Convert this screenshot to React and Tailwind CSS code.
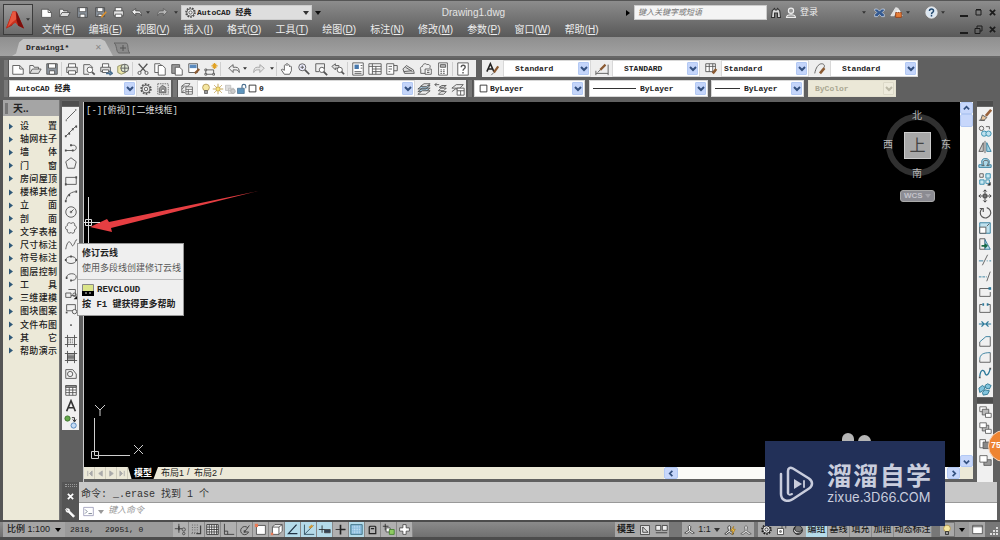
import React from "react";

const steel = "#4a6f8f";

const glyphs = {
  file: <><path fill="#fff" d="M2 4h8l4 4v6H2z" /><path d="M10 4v4h4" /></>,
  open: <><path fill="#f3f3f3" d="M2 13V4h4l1 2h5v2" /><path fill="#ddd" d="M2 13l3-5h10l-3 5z" /></>,
  save: <><path fill="#8b949e" d="M2 2h12v12H2z" /><path fill="#fff" d="M4 2h8v5H4zM5 10h6v4H5z" /></>,
  saveAs: <><path fill="#8b949e" d="M2 2h11v11H2z" /><path fill="#fff" d="M4 2h7v5H4zM5 10h5v3H5z" /><path stroke="#d9902f" strokeWidth="2" d="M15 7l-6 7" /></>,
  print: <><path fill="#fff" d="M4 6V2h8v4" /><path fill="#e4e4e4" d="M2 6h12v6H2z" /><path fill="#fff" d="M4 10h8v4H4z" /></>,
  preview: <><path d="M8 14H2V3h7l3 3v1" /><circle cx="9" cy="9" r="3.2" fill="#fff" /><path strokeWidth="2" d="M11.500 11.500l3 3" /></>,
  publish: <><path fill="#fff" d="M4 6V2h7v4" /><path fill="#ddd" d="M2 6h11v5H2z" /><path fill="#fff" d="M4 9h7v3H4z" /><path stroke={steel} strokeWidth="2" d="M8 13h5M12 10l3 3-3 2" /></>,
  globe: <><path fill="#ece6a8" stroke="#8b8b5a" d="M2 5l5-2 4 2v7l-5 2-4-2z" /><circle cx="10" cy="7" r="4.500" fill="#dfe7d4" /><path d="M10 2.500v9M5.500 7h9" /></>,
  cut: <><path strokeWidth="1.500" d="M3 2l8 9M13 2l-8 9" /><circle cx="4" cy="12.500" r="1.800" /><circle cx="12" cy="12.500" r="1.800" /></>,
  copy: <><path fill="#fff" d="M2 2h6l2 2v8H2z" /><path fill="#fff" d="M6 4h5l3 3v8H6z" /></>,
  paste: <><path fill="#999" d="M2 3h9v10H2z" /><path fill="#fff" d="M6 6h5l3 3v6H6z" /></>,
  match: <><path fill="#fff" d="M2 2h10v10H2z" /><path fill="#5b8bbf" stroke="none" d="M3 3h8v4H3z" /><path stroke="#8b5a32" strokeWidth="2.500" d="M14 8l-5 5" /></>,
  block: <><path d="M2 9v5h9V9z" /><path fill="#fff" d="M1 8h2v2H1zM1 13h2v2H1zM10 13h2v2h-2z" /><path stroke="#e0a020" strokeWidth="1.300" d="M12 1v7M8.500 4.500h7M10 2l4 5M14 2l-4 5" /></>,
  undo: <path fill="#eee" d="M2 7l5-4v3h3c3 0 4 2 4 6-1-2-2-3-4-3H7v3z" />,
  redo: <path fill="#ddd" d="M14 7L9 3v3H6c-3 0-4 2-4 6 1-2 2-3 4-3h3v3z" />,
  pan: <path fill="#fff" d="M5 14L1.500 9l1-1L5 9.500V4l1-1 1 1V2.500l1-1 1 1V4l1-1 1 1v1.500l1-1 1 1V10l-2 4z" />,
  zoomRt: <><circle cx="6" cy="6" r="4" fill="#eef" /><path d="M6 4v4M4 6h4" /><path strokeWidth="2" d="M9 9l5 5" /></>,
  zoomWin: <><path d="M2 11V2h10v6" /><path d="M2 11h4" /><circle cx="9" cy="9" r="3" fill="#fff" /><path strokeWidth="2" d="M11 11l4 4" /></>,
  zoomPrev: <><path fill="#ddd" d="M1 5l4-3v2h4v3H5v2z" /><circle cx="10" cy="9" r="3" fill="#fff" /><path strokeWidth="2" d="M12 11l3 3" /></>,
  props: <><path fill="#fff" d="M2 1h12v14H2z" /><path fill="#4778ad" stroke="none" d="M4 3h5v5H4z" /><path d="M11 4h2M11 7h2M4 11h8M4 13h8" /></>,
  design: <><path fill="#fff" d="M1 2h14v12H1z" /><path d="M1 5h14M5 2v12M9 5v9M5 8h10M5 11h10" /></>,
  palette: <><path fill="#fff" d="M2 2h8v12H2z" /><path d="M10 4h4v6h-4M4 5h4M4 8h4M4 11h2" /></>,
  sheet: <path fill="#ddd" d="M1 8l4-4 8 5 1 4H3zM2 11l9-1M4 6l8 5" />,
  markup: <><path d="M2 9c-1-2 0-4 2-4 0-3 4-4 5-2 3-1 5 2 3 4" /><path fill="#fff" d="M7 8h7v6H7z" /><path d="M2 9v4h5M9 10h3M9 12h3" /></>,
  calc: <><path fill="#fff" d="M3 1h10v14H3z" /><path fill="#bbb" d="M5 3h6v3H5z" /><path strokeDasharray="2 1" d="M5 9h6M5 11h6M5 13h6" /></>,
  help: <><path fill="#fff" d="M2 1h12v14H2z" /><path strokeWidth="1.600" d="M6 6c0-3 4.500-3 4.500 0 0 2-2.500 1.500-2.500 4M8 11.500v1.500" /></>,
  styleA: <><path stroke="#222" strokeWidth="1.800" d="M1 11L5 2l4 9M3 8h4" /><path stroke="#8b5a32" strokeWidth="2.500" d="M14 5l-5 7" /><path d="M9 12l-3 3" /></>,
  styleDim: <><path d="M1 13h14M1 10v5M15 3v12" /><path stroke="#8b5a32" strokeWidth="2.500" d="M12 3l-6 6" /><path d="M6 9l-3 3" /></>,
  styleTable: <><path fill="#fff" d="M2 2h11v9H2z" /><path d="M2 5h11M6 2v9M10 2v9" /><path stroke="#8b5a32" strokeWidth="3" d="M14 8l-4 5" /></>,
  styleLead: <><path d="M2 13c1-6 4-11 8-11 3 0 4 3 2 5" /><path stroke="#8b5a32" strokeWidth="3" d="M13 7l-5 6" /></>,
  gear: <><circle cx="8" cy="8" r="5.500" strokeDasharray="2 1.400" strokeWidth="2" /><circle cx="8" cy="8" r="4.500" fill="#eee" /><circle cx="8" cy="8" r="2" /></>,
  gearBox: <><path strokeDasharray="2 1" d="M1 1h14v14H1z" /><path fill="#999" d="M3 13V7l4-4 5 3v7z" /><circle cx="8" cy="10" r="2" fill="#fff" /></>,
  layers: <><path fill="#fff" d="M1 5l4-3h6L9 5zM1 9l3-3M1 13l3-3" /><path d="M1 5v8h4" /><path fill="#fff" d="M6 6h8v9H6z" /><path d="M6 9h8M6 12h8M9 9v6" /></>,
  layerSet: <><path fill="#a7cbe2" d="M1 11l5-4h9l-5 4zM1 8l5-4h9l-5 4z" /><path fill="#eee" d="M1 14l5-4h9l-5 4zM4 5l4-3h7l-4 3z" /></>,
  layerPrev: <><path d="M1 3h5M3 1L1 3l2 2" /><path fill="#eee" d="M5 14l3-3h6l-3 3zM5 10l3-3h6l-3 3zM6 6l3-2h5l-3 2z" /></>,
  layerState: <><path fill="#eee" d="M1 7l5-4h8l-4 4zM1 11l4-3h4" /><path fill="#fff" d="M7 7h8v8H7z" /><path d="M7 10h8M11 10v5" /></>,
  bulb: <><circle cx="8" cy="6" r="4.500" fill="#f5e6a0" stroke="#a88a40" /><path fill="#999" d="M6 10h4v4H6z" /></>,
  sun: <><circle cx="8" cy="8" r="3" fill="#f7e27a" stroke="#b08a28" /><path stroke="#b08a28" d="M8 1v3M8 12v3M1 8h3M12 8h3M3 3l2 2M11 11l2 2M13 3l-2 2M5 11l-2 2" /></>,
  freeze: <><path fill="#ddd" stroke="#bbb" d="M2 3h7v7H2zM6 7h7v7H6z" /><circle cx="12" cy="11" r="3" fill="#ccc" stroke="#aaa" /></>,
  unlock: <><path fill="#5e95bd" stroke={steel} d="M2 7h9v7H2z" /><path stroke={steel} strokeWidth="1.500" d="M8 7V4c0-3 5-3 5 0v3" /></>,
  square: <path fill="#fff" stroke="#222" strokeWidth="1.500" d="M2 2h12v12H2z" />,
  line: <><path d="M3 13L13 3" /><path strokeWidth="2" d="M2 14h1M13 2h1" /></>,
  xline: <><path d="M2 14L14 2" /><path strokeWidth="2.500" d="M5 11h2M9 6h2M1 14h2M13 3h2" /></>,
  pline: <><path d="M2 12h9c4 0 4-6 0-6H7" /><path strokeWidth="2.500" d="M1 12h2M9 12h2M7 6h2" /></>,
  polygon: <path d="M8 2l6 4.500L12 14H4L2 6.500z" />,
  rect: <><path d="M2 5h12v8H2z" /><path strokeWidth="2.500" d="M1 13h2M13 5h2" /></>,
  arc: <><path d="M2 14C3 8 6 4 13 3" /><path strokeWidth="2.500" d="M1 14h2M5 7h2M13 3h2" /></>,
  circle: <><circle cx="8" cy="8" r="6" /><path d="M8 8l3-3" /><circle cx="8" cy="8" r="1" /></>,
  cloud: <path d="M4 5c-1-3 3-4 4-2 2-2 5-1 4 2 3 1 3 4 0 5 1 4-3 5-4 3-2 2-5 0-4-3-3 0-3-4 0-5z" />,
  spline: <><path d="M2 14c1-6 3-10 5-8s2 6 4 3 2-6 4-6" /></>,
  ellipse: <><ellipse cx="8" cy="8" rx="6" ry="4" /><path strokeWidth="2.500" d="M1 8h2M13 8h2M7 4h2" /></>,
  ellArc: <><path d="M3 8c1-5 11-5 11 0 0 3-3 4-6 4" /><path strokeWidth="2.500" d="M2 9h2M7 12h2" /></>,
  insert: <><path d="M5 4h8v7H8M2 8h6v5H2z" /><circle cx="12" cy="10" r="2" /><path fill="#111" stroke="none" d="M15 11v4h-4z" /></>,
  makeBlock: <><path d="M3 3h10v6M3 3v7h7" /><path strokeWidth="2" d="M2 12h2" /><circle cx="12" cy="11" r="2.500" /></>,
  point: <path fill="#666" stroke="none" d="M7 7h2v2H7z" />,
  hatch: <><path d="M4 1v14M12 1v14M1 4h14M1 12h14" /><path strokeDasharray="1 1" d="M5 6h6M5 8h6M5 10h6" /></>,
  gradient: <><path fill="#aaa" d="M4 4h8v8H4z" /><path d="M4 1v14M12 1v14M1 4h14M1 12h14M4 7h8M4 9h8" /></>,
  region: <><path d="M2 3h8l4 5v5H2z" /><circle cx="7" cy="8" r="3" /></>,
  table: <><path fill="#fff" d="M2 3h12v11H2z" /><path fill="#999" d="M2 3h12v2H2z" /><path d="M2 8h12M2 11h12M6 5v9M10 5v9" /></>,
  text: <path stroke="#333" strokeWidth="1.900" d="M3 14L8 2l5 12M5 10h6" />,
  addSel: <><circle cx="4" cy="4" r="3" fill="#65a84b" stroke="#386f28" /><path stroke="#222" d="M9 3h3v4M10 5l2 3 2-3" /><circle cx="11" cy="12" r="3" fill="#c4daf4" stroke="#4a80b8" /></>,
  erase: <><path stroke="#98613a" strokeWidth="3" d="M15 2l-6 7" /><path fill="#e9c79f" d="M5 8l5 3-3 3H3z" /><path d="M1 14h7" /></>,
  copyObj: <><circle cx="4" cy="5" r="2.500" /><path d="M9 3h4v3" /><circle cx="7" cy="11" r="3" fill="#bfe1ee" stroke="#2c88aa" /><circle cx="12" cy="11" r="3" fill="#bfe1ee" stroke="#2c88aa" /></>,
  mirror: <><path fill="#ccc" d="M1 13h5V3z" /><path d="M8 1v14" /><path fill="#a9d8e8" stroke="#2c7899" d="M15 13h-5V3z" /></>,
  offset: <><path fill="#acd8e9" stroke="#2c7899" d="M1 13v-3h4c-2-4 0-8 4-7 4 0 5 4 3 7h3v3z" /><path d="M4 11h3c-2-4-1-6 2-6s4 2 1 6h3" /></>,
  array: <><path d="M2 2h4v4H2z" /><path stroke="#2c88aa" fill="#c9e8f2" d="M9 2h5v5H9zM2 9h5v5H2z" /><path stroke="#2c88aa" d="M9 9h4v4H9z" /><path fill="#111" d="M14 12v3h-3z" /></>,
  move: <path stroke="#333" d="M8 1v14M1 8h14M6 3l2-2 2 2M6 13l2 2 2-2M3 6L1 8l2 2M13 6l2 2-2 2M6 6h4v4H6z" />,
  rotate: <><path strokeWidth="1.300" d="M5 4a6 6 0 1 0 5-1" /><path strokeWidth="1.300" d="M2 4h4v4" /></>,
  scale: <><path fill="#bfe1ee" stroke="#2c7899" d="M2 2h12v12H2z" /><path fill="#fff" d="M2 7h7v7H2z" /><path d="M10 6l3-3" /></>,
  stretch: <><path d="M2 14V2h6v12z" /><path fill="#bfe1ee" stroke="#2c7899" d="M8 3l6 11H8z" /><path stroke="#186b46" strokeWidth="2" d="M4 10h6M8 8l2 2-2 2" /></>,
  trim: <><path stroke="#2c7899" d="M1 9h5M10 9h1M13 9h2" /><path d="M5 14l6-12" /></>,
  extend: <><path stroke="#2c7899" strokeDasharray="3 1" d="M1 9h9" /><path d="M10 14l4-11" /></>,
  breakPt: <><path d="M2 4h12M2 4v9h12V8" /><path stroke="#2c7899" strokeWidth="3" d="M12 4h3" /></>,
  breakObj: <><path d="M5 4H2v9h12V4h-3" /><path stroke="#2c7899" strokeWidth="3" d="M5 4h2M10 4h2" /></>,
  join: <><path stroke="#2c7899" strokeWidth="1.400" d="M1 8h14M4 5l3 3-3 3M12 5L9 8l3 3" /></>,
  chamfer: <><path d="M14 3v11H2V9" /><path stroke="#2c7899" d="M2 9l7-6h5" /></>,
  fillet: <><path d="M14 3v11H2v-3" /><path stroke="#2c7899" d="M2 11c0-6 4-8 12-8" /></>,
  blend: <><path stroke="#2c7899" strokeWidth="1.500" d="M2 12c1-9 5-8 6-4s4 3 6-5" /><path strokeWidth="2" d="M1 13h2M13 3h2" /></>,
  explode: <path fill="#83c4dd" stroke="#28738f" d="M1 7l4-3 3 2-1 3-5 3zM8 4l3-2 4 2-2 4-4-1zM5 12l3-3 5 1-2 4-5 1z" />,
  order: <><path fill="#fff" d="M1 1h8v6H1z" /><path fill="#bbb" d="M4 4h8v7H4z" /><path fill="#fff" d="M8 9h7v5H8z" /></>,
  order2: <><path fill="#bbb" d="M4 4h8v7H4z" /><path fill="#fff" d="M1 1h8v6H1zM8 9h7v5H8z" /></>,
  order3: <><path fill="#fff" d="M1 2h7v10H1z" /><path fill="#888" d="M5 5h9v8H5z" /></>,
  order4: <><path fill="#999" d="M6 7h9v7H6z" /><path fill="#fff" d="M1 2h9v8H1z" /></>,
  infer: <><path stroke="#333" d="M6 1v11M1 7h9" /><path strokeWidth="2" d="M6 4v5" /><circle cx="12" cy="8" r="2" /><circle cx="12" cy="13" r="1.500" /></>,
  snap: <><path strokeDasharray="1 2" d="M3 2v12M6 2v12M9 2v12M2 13h9" /><path strokeWidth="1.500" d="M13 3v10H8" /></>,
  grid: <><path fill="#fff" stroke="#222" d="M1 2h14v12H1z" /><path stroke="#333" d="M4 2v12M7 2v12M10 2v12M13 2v12M1 5h14M1 8h14M1 11h14" /></>,
  ortho: <path stroke="#333" d="M3 1v13h12M3 10h4v4" />,
  polar: <><path stroke="#333" d="M12 6a5 5 0 1 0 1 5H8l6-8" /><path strokeWidth="2" d="M8 9v3" /></>,
  osnap: <><path fill="#fff" d="M3 3h11v11H3z" /><path fill="#e87955" stroke="none" d="M1 1h4v4H1z" /></>,
  osnap3: <><path fill="#fff" d="M3 5l3-3h9v8l-4 4H3z" /><path d="M3 5h8v9M11 5l4-3" /><path fill="#e87955" stroke="none" d="M1 12h3v3H1z" /></>,
  otrack: <path stroke="#234" strokeWidth="1.500" d="M13 2L3 13h11" />,
  ducs: <><path stroke="#245" d="M3 2v12h12M3 14L14 3" /><path stroke="#d39a37" strokeWidth="3" d="M9 6l4-3" /></>,
  dyn: <><path stroke="#222" d="M5 3v9M1 8h8" /><path fill="#345" d="M8 8h7v4H8z" /></>,
  lwt: <><path stroke="#222" d="M2 8h12" /><path stroke="#222" strokeWidth="2" d="M8 2v12M8 8h6" /></>,
  trans: <><path fill="#8bbdde" stroke="#367" d="M1 2h14v12H1z" /><path stroke="#dff0fa" strokeDasharray="1 1" d="M3 4h10M3 6h10M3 8h10M3 10h10M3 12h10" /></>,
  qp: <path stroke="#222" strokeWidth="1.500" d="M5 4h6l1 1v8H4V5zM6 7h4" />,
  cycle: <><path stroke="#222" d="M4 1v8M1 4h7" /><path fill="#fff" d="M5 6h5v5H5z" /><path fill="#8fcb62" stroke="#3c7d28" d="M9 8h6v6H9z" /></>,
  plus: <path fill="#fff" d="M6 2h4v4h4v4h-4v4H6v-4H2V6h4z" />,
  layout: <><path fill="#ddd" stroke="#333" d="M2 2h12v12H2z" /><path d="M5 4v7h7M5 4l7 7" /></>,
  quick: <path fill="#eee" stroke="#333" d="M1 3h6v6H1zM9 3h6v6H9zM1 12h14" />,
  scaleMan: <path fill="#fff" d="M8 2l2 2-1 5 6 4-3 1-4-3-4 3-3-1 6-4-1-5z" />,
  annot: <><path fill="#eee" d="M7 2l2 2-1 5 5 4-2 1-4-3-4 3-2-1 5-4-1-5z" /><path fill="#f6c948" stroke="#a87922" d="M13 3l-4 6h3l-1 5 4-7h-3z" /></>,
  lock: <><path fill="#fff" stroke="#333" d="M2 6h8v8H2z" /><path stroke="#333" d="M8 6V2h5v4M5 9h2v2H5z" /></>,
  moon: <><circle cx="8" cy="8" r="6" fill="#777" /><path fill="#ddd" d="M4 4c-2 6 5 9 9 4-1 5-9 7-11 1z" /></>,
  screen: <><path fill="#fff" stroke="#333" d="M1 2h14v12H1z" /><path d="M1 4h14" /></>,
  binoc: <><path fill="#ddd" stroke="#333" strokeWidth="1.400" d="M2 14l1-9 3-3 1 2h2l1-2 3 3 1 9h-4v-6H6v6z" /></>,
  user: <><circle cx="8" cy="5" r="3.500" fill="#999" stroke="#eee" strokeWidth="1.500" /><path fill="#999" stroke="#eee" strokeWidth="1.500" d="M2 14c0-5 12-5 12 0z" /></>,
  exchange: <><path fill="#355a90" stroke="#dbe4f0" d="M1 3h4l3 3 3-3h4v2l-3 3 3 3v3h-4l-3-3-3 3H1v-3l3-3-3-3z" /></>,
  a360: <><path fill="#ddd" stroke="#eee" d="M1 12L7 2l3 1 5 9-4 1-3-7-3 6z" /><path fill="#e57c36" stroke="#943c13" d="M7 8h7v6H7z" /><path stroke="#fff" d="M9 8V6h3v2" /></>,
  ask: <><circle cx="8" cy="8" r="7" fill="#dce7f2" stroke="#eee" /><path stroke="#22496e" strokeWidth="1.800" d="M5.500 6c0-3 5-3 5 0 0 2-2.500 1.500-2.500 4M8 11v2" /></>,
  wrench: <path fill="#fff" stroke="#fff" d="M2 2l4 1 1 3 7 7-2 2-7-7-3-1-1-4 3 3 1-1z" />,
  prompt: <><path fill="#fff" stroke="#88a" d="M1 2h14v12H1z" /><path stroke="#456" d="M3 5l3 3-3 3M8 11h5" /></>,
};

function Icon({ name, className = "size-4" }) {
  return (
    <svg viewBox="0 0 16 16" className={`shrink-0 ${className}`} fill="none" stroke="currentColor" strokeWidth="1" aria-hidden="true">
      {glyphs[name]}
    </svg>
  );
}

function Tool({ name, className = "h-4 w-[17px]", size = "size-[14px]" }) {
  return (
    <button type="button" aria-label={name} className={`flex shrink-0 items-center justify-center ${className}`}>
      <Icon name={name} className={size} />
    </button>
  );
}

function Caret({ className = "text-[#333]" }) {
  return (
    <svg viewBox="0 0 6 4" className={`h-1 w-[6px] shrink-0 ${className}`} aria-hidden="true">
      <path fill="currentColor" d="M0 0h6L3 4z" />
    </svg>
  );
}

function SmallCaret() {
  return (
    <span className="flex w-[6px] shrink-0 justify-center text-[#333]">
      <svg viewBox="0 0 6 4" className="h-[3px] w-1" aria-hidden="true"><path fill="currentColor" d="M0 0h6L3 4z" /></svg>
    </span>
  );
}

function Chevron({ disabled }) {
  return (
    <span className={`flex w-[11px] shrink-0 items-center justify-center self-stretch rounded-[1px] border ${disabled ? "border-[#dcd9c8] bg-[#eeebdc] text-[#bbb8a6]" : "border-[#b3c9f4] bg-[#c4d5fa] text-[#33507f]"}`}>
      <svg viewBox="0 0 8 6" className="h-[6px] w-2" fill="none" stroke="currentColor" strokeWidth="2" aria-hidden="true"><path d="M1 1l3 3 3-3" /></svg>
    </span>
  );
}

function Combo({ label, value, width, pad = "pl-3", lead, disabled }) {
  return (
    <div className={`flex h-[17px] shrink-0 items-center border p-px ${width} ${disabled ? "border-[#e4e1d0] bg-[#ebe8d7]" : "border-[#d8d8d8] bg-white"}`}>
      {lead}
      <select aria-label={label} disabled={disabled} className={`h-full min-w-0 flex-1 appearance-none bg-transparent font-['Liberation_Mono','Noto_Sans_CJK_SC',monospace] text-[8px] font-bold outline-none ${pad} ${disabled ? "text-[#aaa792]" : "text-[#222]"}`}>
        <option>{value}</option>
      </select>
      <Chevron disabled={disabled} />
    </div>
  );
}

const Grip = ({ className = "w-[5px]" }) => <span className={`shrink-0 self-stretch border-r border-[#555] bg-[#777] ${className}`} />;
const Sep = () => <span className="mx-[1px] h-[14px] w-px shrink-0 bg-[#cfcfcf]" />;

const menus = [["文件", "F"], ["编辑", "E"], ["视图", "V"], ["插入", "I"], ["格式", "O"], ["工具", "T"], ["绘图", "D"], ["标注", "N"], ["修改", "M"], ["参数", "P"], ["窗口", "W"], ["帮助", "H"]];

function WindowButtons({ restore }) {
  return (
    <div className="flex w-[36px] shrink-0 items-center justify-between text-[#1c1c1c]">
      <button type="button" aria-label="最小化" className="h-2 w-[8px] border-b-2 border-current" />
      <button type="button" aria-label="还原" className="flex size-[9px] items-center">
        <svg viewBox="0 0 9 9" className="size-[9px]" fill="none" stroke="currentColor" aria-hidden="true">
          {restore ? <path d="M1 3.500h5v5H1zM3 3V1h5v5H6" /> : <path d="M2 2h5v5H2zM2 1.500h5" />}
        </svg>
      </button>
      <button type="button" aria-label="关闭">
        <svg viewBox="0 0 8 8" className="size-[7px]" stroke="currentColor" strokeWidth="2" aria-hidden="true"><path d="M1 1l6 6M7 1L1 7" /></svg>
      </button>
    </div>
  );
}

function Header() {
  return (
    <header className="flex h-[37px] shrink-0 border-t border-[#555] bg-linear-to-b from-[#8d8d8d] to-[#595959] pl-[3px]">
      <button type="button" aria-label="应用程序菜单" className="mt-[3px] flex h-[31px] w-[30px] shrink-0 items-center border border-[#3c3c3c] bg-linear-to-b from-[#9b9b9b] to-[#6c6c6c] pl-[2px]">
        <svg viewBox="0 0 20 20" className="h-5 w-[19px]" aria-hidden="true">
          <path fill="#a71912" d="M0 19L7 1h4l8 18-6-3-3-5-4 5z" />
          <path fill="#c9321f" d="M0 19L7 1h3l2 9 1 6-3-3-4 2z" />
          <path fill="#e8573f" d="M7 1h3l1 8-4 3-5 5z" />
          <path fill="#7d0e0b" d="M11 1l8 18-6-3-2-6z" />
        </svg>
        <SmallCaret />
      </button>
      <div className="flex min-w-0 flex-1 flex-col">
        <div className="flex h-[21px] items-center pt-[2px] pr-1 pl-1 text-[#4a4a4a]">
          {["file", "open", "save", "saveAs", "print", "undo"].map((n) => <Tool key={n} name={n} className="h-4 w-[18px]" size="size-[13px]" />)}
          <SmallCaret />
          <Tool name="redo" className="h-4 w-[22px] opacity-60" size="size-[13px]" />
          <SmallCaret />
          <div className="ml-[2px] flex h-[15px] w-[131px] shrink-0 items-center border border-[#ccc] bg-[#dedede] px-[2px]">
            <Icon name="gear" className="size-[13px]" />
            <select aria-label="工作空间" className="min-w-0 flex-1 appearance-none bg-transparent font-['Liberation_Mono','Noto_Sans_CJK_SC',monospace] text-[8px] font-bold text-[#222] outline-none">
              <option>AutoCAD 经典</option>
            </select>
            <Caret />
          </div>
          <Caret className="ml-[3px] text-[#111]" />
          <h1 className="flex-1 text-center text-[10px] text-[#e4e4e4]">Drawing1.dwg</h1>
          <svg viewBox="0 0 4 6" className="mr-1 h-[6px] w-1" aria-hidden="true"><path d="M0 0l4 3-4 3z" /></svg>
          <input aria-label="搜索" placeholder="键入关键字或短语" className="h-[15px] w-[133px] shrink-0 border border-[#ccc] bg-[#f4f4f4] px-[3px] text-[8px] italic outline-none placeholder:text-[#777]" />
          <Tool name="binoc" className="ml-[1px] h-4 w-[17px]" size="size-[12px]" />
          <button type="button" className="flex items-center gap-[3px] text-[9px] text-[#eee]"><Icon name="user" className="size-[12px]" />登录</button>
          <span className="flex items-center pl-[43px]"><SmallCaret /></span>
          <Tool name="exchange" className="ml-1 h-4 w-[17px]" size="size-[11px]" />
          <Tool name="a360" size="size-[13px]" />
          <SmallCaret />
          <Tool name="ask" className="ml-[12px] h-4 w-[17px]" size="size-[13px]" />
          <SmallCaret />
          <div className="pl-[14px]"><WindowButtons /></div>
        </div>
        <nav className="flex flex-1 items-center pr-1 pl-[9px] text-[10px] text-[#ededed]">
          <div className="flex flex-1 gap-[14px]">
            {menus.map(([t, k]) => <button type="button" key={k} className="leading-3">{t}(<u>{k}</u>)</button>)}
          </div>
          <WindowButtons restore />
        </nav>
      </div>
    </header>
  );
}

function FileTabs() {
  return (
    <div className="flex h-[21px] shrink-0 items-end border-b-2 border-[#666] bg-linear-to-b from-[#8f8f8f] to-[#a2a2a2] pl-[12px]">
      <div className="flex h-[17px] w-[101px] items-center justify-between bg-[#c3c3c3] pr-[11px] pl-[14px] [clip-path:polygon(0_100%,4%_85%,7%_20%,11%_0,88%_0,92%_12%,100%_100%)]">
        <button type="button" className="font-['Liberation_Mono',monospace] text-[8px] font-bold text-[#222]">Drawing1*</button>
        <button type="button" aria-label="关闭标签" className="text-[8px] leading-3 text-[#888]">✕</button>
      </div>
      <button type="button" aria-label="新建标签">
        <svg viewBox="0 0 18 12" className="mb-[2px] h-3 w-[18px]" fill="#8b8b8b" stroke="#666" aria-hidden="true"><path d="M1 1h12c3 0 1 9 4 10H6C3 11 4 2 1 1z" /><path stroke="#555" d="M10 3v6M7 6h6" /></svg>
      </button>
    </div>
  );
}

const stdGroups = [["file", "open", "save"], ["print", "preview", "publish", "globe"], ["cut", "copy", "paste", "match", "block"]];

function StyleCombo({ icon, label, value, pad }) {
  return (
    <div className="flex shrink-0 items-center bg-[#eee]">
      <Tool name={icon} className="h-[17px] w-[21px]" />
      <Combo label={label} value={value} width="w-[88px]" pad={pad} />
    </div>
  );
}

function Toolbars() {
  return (
    <div className="shrink-0 bg-[#606060] pt-[2px] pb-[3px] pl-[4px] text-[#555]">
      <div className="flex items-center">
        <div className="flex h-[17px] w-[472px] shrink-0 items-center bg-[#eee]">
          <Grip />
          {stdGroups.map((g) => <React.Fragment key={g[0]}>{g.map((n) => <Tool key={n} name={n} />)}<Sep /></React.Fragment>)}
          <Tool name="undo" className="ml-[3px] h-4 w-[17px]" /><SmallCaret /><Tool name="redo" className="h-4 w-[21px] opacity-50" /><SmallCaret />
          <Sep />
          {["pan", "zoomRt", "zoomWin", "zoomPrev"].map((n) => <Tool key={n} name={n} />)}
          <Sep />
          {["props", "design", "palette", "sheet", "markup", "calc"].map((n) => <Tool key={n} name={n} />)}
          <Sep />
          <Tool name="help" />
        </div>
        <div className="flex flex-1 items-center pl-[6px]">
          <StyleCombo icon="styleA" label="文字样式" value="Standard" pad="pl-[10px]" />
          <StyleCombo icon="styleDim" label="标注样式" value="STANDARD" pad="pl-[10px]" />
          <StyleCombo icon="styleTable" label="表格样式" value="Standard" pad="pl-px" />
          <StyleCombo icon="styleLead" label="多重引线样式" value="Standard" pad="pl-[10px]" />
        </div>
      </div>
      <div className="flex items-center pt-[3px]">
        <Grip className="h-[17px] w-[5px]" />
        <Combo label="工作空间" value="AutoCAD 经典" width="w-[128px]" pad="pl-[5px]" />
        <div className="flex h-[17px] bg-[#e8e8e8]"><Tool name="gear" className="h-[17px] w-[17px]" /><Tool name="gearBox" className="h-[17px] w-[17px]" size="size-3" /></div>
        <Grip className="ml-[2px] h-[17px] w-[5px]" />
        <div className="flex h-[17px] items-center bg-[#eee]">
          <Tool name="layers" className="h-4 w-[19px]" size="size-[13px]" />
          <Combo label="图层" value="0" width="w-[218px]" pad="pl-[2px]" lead={<span className="flex items-center pl-[1px]">
            {["bulb", "sun", "freeze", "unlock"].map((n) => <Icon key={n} name={n} className="h-[12px] w-[12px]" />)}<Icon name="square" className="size-[9px]" />
          </span>} />
          {["layerSet", "layerPrev", "layerState"].map((n) => <Tool key={n} name={n} />)}
        </div>
        <Grip className="mr-[1px] ml-[2px] h-[17px] w-[5px]" />
        <Combo label="颜色" value="ByLayer" width="w-[111px]" pad="pl-[2px]" lead={<Icon name="square" className="ml-[3px] size-[9px]" />} />
        <span className="w-[4px]" />
        <Combo label="线型" value="ByLayer" width="w-[119px]" pad="pl-1" lead={<span className="ml-[2px] h-px w-[43px] bg-[#333]" />} />
        <span className="w-[3px]" />
        <Combo label="线宽" value="ByLayer" width="w-[93px]" pad="pl-1" lead={<span className="ml-[2px] h-px w-[25px] bg-[#333]" />} />
        <span className="w-[4px]" />
        <Combo label="打印样式" value="ByColor" width="w-[88px]" pad="pl-[5px]" disabled />
      </div>
    </div>
  );
}

const treeItems = ["设 置", "轴网柱子", "墙 体", "门 窗", "房间屋顶", "楼梯其他", "立 面", "剖 面", "文字表格", "尺寸标注", "符号标注", "图层控制", "工 具", "三维建模", "图块图案", "文件布图", "其 它", "帮助演示"];

function Palette() {
  return (
    <aside className="flex w-[60px] shrink-0 flex-col border-r border-l-[3px] border-[#777] border-l-[#555] bg-[#ece9d8]">
      <h2 className="flex h-[16px] shrink-0 items-center gap-[5px] bg-[#a5a5a5] pl-[2px] text-[10px] font-bold text-[#222]"><span className="h-[11px] w-[3px] bg-[#777]" />天..</h2>
      <ul className="flex h-[241px] shrink-0 flex-col justify-between pt-1 text-[9px] text-[#222]">
        {treeItems.map((t) => (
          <li key={t}>
            <button type="button" className="flex h-3 w-full items-center pl-[6px] leading-3">
              <svg viewBox="0 0 4 6" className="mr-[7px] h-[7px] w-1" aria-hidden="true"><path fill="#2f5878" d="M0 0l4 3-4 3z" /></svg>
              <span className="w-[37px] font-medium [text-align-last:justify]">{t}</span>
            </button>
          </li>
        ))}
      </ul>
    </aside>
  );
}

const drawTools = ["line", "xline", "pline", "polygon", "rect", "arc", "circle", "cloud", "spline", "ellipse", "ellArc", "insert", "makeBlock", "point", "hatch", "gradient", "region", "table", "text", "addSel"];
const modifyTools = ["erase", "copyObj", "mirror", "offset", "array", "move", "rotate", "scale", "stretch", "trim", "extend", "breakPt", "breakObj", "join", "chamfer", "fillet", "blend", "explode"];

const Handle = () => <span className="mx-auto block h-[7px] w-full shrink-0 border-y border-[#666] bg-[#4d4d4d]" />;

function Arrow({ d, label, className }) {
  return (
    <button type="button" aria-label={label} className={`flex shrink-0 items-center justify-center rounded-[2px] border border-[#b3c9f4] bg-[#c7d7fb] text-[#33507f] ${className}`}>
      <svg viewBox="0 0 8 8" className="size-[7px]" fill="none" stroke="currentColor" strokeWidth="2" aria-hidden="true"><path d={d} /></svg>
    </button>
  );
}

function Canvas() {
  return (
    <section className="relative min-w-0 flex-1 overflow-hidden bg-black">
      <p className="pt-[3px] pl-[2px] font-['Liberation_Mono','Noto_Sans_CJK_SC',monospace] text-[9px] text-[#ddd]">[-][俯视][二维线框]</p>
      <svg viewBox="0 0 64 62" className="absolute bottom-1 left-[3px] h-[62px] w-16" fill="none" stroke="#cfcfcf" aria-hidden="true">
        <path d="M4.500 50.500h7v7h-7zM7.500 17v37.500M7.500 54.500H43" />
        <path d="M8 4l5 5 5-5M13 9v6M47 44l9 9M56 44l-9 9" />
      </svg>
      <svg viewBox="0 0 180 60" className="absolute top-[85px] left-0 h-[60px] w-[180px]" aria-hidden="true">
        <path fill="#e63e42" d="M6 40l17-8 2 3L174 4 27 41l1 4z" />
        <path stroke="#ddd" fill="none" d="M4.500 10v50M0 35.500h16M1.500 32.500h6v6h-6z" />
      </svg>
      <div className="absolute top-[10px] right-[10px] size-[66px]">
        <span className="absolute inset-[2px] rounded-full border-[6px] border-[#303030]" />
        <button type="button" className="absolute top-5 left-5 size-[27px] border border-[#ccc] bg-[#a8a8a8] text-[16px] leading-6 text-[#444]">上</button>
        <div className="absolute inset-0 text-[10px] leading-3 text-[#b8b8b8]">
          <span className="absolute -top-[2px] left-7">北</span>
          <span className="absolute -bottom-[2px] left-7">南</span>
          <span className="absolute top-[27px] -left-[1px]">西</span>
          <span className="absolute top-[27px] -right-[1px]">东</span>
        </div>
      </div>
      <button type="button" className="absolute top-[88px] right-[25px] flex h-[12px] w-[35px] items-center justify-between rounded-[3px] border border-[#aaa] bg-[#8b8b92] px-[3px] text-[8px] font-bold text-[#c4c4cb]">WCS<Caret className="text-[#a5a5ab]" /></button>
    </section>
  );
}

function Sheets() {
  return (
    <div className="flex h-[12px] shrink-0 items-center bg-[#ece9d8] text-[9px] text-[#222]">
      {["M2 1v6M7 1L4 4l3 3z", "M6 1L2 4l4 3z", "M2 1l4 3-4 3z", "M6 1v6M1 1l3 3-3 3z"].map((d) => (
        <button type="button" key={d} aria-label="滚动标签" className="flex h-full w-[11px] shrink-0 items-center justify-center border-r border-[#d0cdbc]">
          <svg viewBox="0 0 8 8" className="size-[7px]" fill="#aaa" stroke="#aaa" aria-hidden="true"><path d={d} /></svg>
        </button>
      ))}
      <button type="button" className="h-full w-[30px] bg-black leading-3 font-bold text-white [clip-path:polygon(0_0,100%_0,85%_100%,12%_100%)]">模型</button>
      <button type="button" className="w-[29px] leading-3">布局1</button><span className="w-1">/</span>
      <button type="button" className="w-[29px] leading-3">布局2</button><span className="w-1">/</span>
      <div className="ml-auto flex h-full w-[296px] bg-[#fbfbf8]">
        <Arrow label="向左" d="M5 1L2 4l3 3" className="w-[14px]" />
        <span className="flex-1" />
        <Arrow label="向右" d="M3 1l3 3-3 3" className="w-[13px]" />
      </div>
      <span className="w-[13px]" />
    </div>
  );
}

function Tooltip() {
  return (
    <div role="tooltip" className="absolute top-[143px] left-[17px] z-10 h-[73px] w-[107px] border border-[#999] bg-[#efefef] pt-[3px] text-[9px] leading-3 text-[#222]">
      <p className="px-1 font-bold">修订云线</p>
      <p className="mt-[3px] px-1 whitespace-nowrap text-[#555]">使用多段线创建修订云线</p>
      <hr className="mt-[5px] mb-1 border-[#bbb]" />
      <p className="flex items-center gap-[3px] px-1 font-['Liberation_Mono',monospace] font-bold">
        <svg viewBox="0 0 12 12" className="size-3" aria-hidden="true"><path fill="#dbe58a" stroke="#888" d="M.5.500h11v11H.5z" /><path d="M0 7h12v5H0z" /><path stroke="#ddd" d="M3 9h2M7 9h2" /></svg>
        REVCLOUD
      </p>
      <p className="mt-[3px] px-1 font-['Liberation_Mono','Noto_Sans_CJK_SC',monospace] font-bold whitespace-nowrap">按 F1 键获得更多帮助</p>
    </div>
  );
}

function Workspace() {
  return (
    <div className="relative flex min-h-0 flex-1 bg-[#606060]">
      <div className="ml-[2px] flex w-[17px] shrink-0 flex-col self-start bg-[#f0f0f0] text-[#505050]">
        <Handle />
        <div className="flex h-[323px] flex-col justify-between">
          {drawTools.map((n) => <Tool key={n} name={n} className="h-4 w-[17px]" size="size-[14px]" />)}
        </div>
      </div>
      <div className="mt-[2px] ml-1 flex min-w-0 flex-1 flex-col border-l border-[#ccc]">
        <div className="flex min-h-0 flex-1">
          <Canvas />
          <div className="flex w-[13px] shrink-0 flex-col bg-[#fbfbf8]">
            <Arrow label="向上" d="M1 5l3-3 3 3" className="h-3" />
            <button type="button" aria-label="滚动块" className="h-[13px] rounded-[2px] border border-[#b3c9f4] bg-[#c7d7fb]" />
            <span className="flex-1" />
            <Arrow label="向下" d="M1 3l3 3 3-3" className="h-3" />
          </div>
        </div>
        <Sheets />
        <span className="h-[3px] shrink-0" />
      </div>
      <div className="mr-[7px] ml-1 flex w-4 shrink-0 flex-col bg-[#f0f0f0] text-[#555]">
        <Handle />
        <div className="flex h-[290px] shrink-0 flex-col justify-between">
          {modifyTools.map((n) => <Tool key={n} name={n} className="h-4 w-4" size="size-[14px]" />)}
        </div>
        <Handle />
        {["order", "order2", "order3", "order4"].map((n) => <Tool key={n} name={n} className="h-4 w-4" size="size-[13px]" />)}
      </div>
      <Tooltip />
    </div>
  );
}

function CommandLine() {
  return (
    <div className="mr-[3px] ml-[2px] flex h-[38px] shrink-0">
      <div className="flex w-[17px] shrink-0 flex-col items-center justify-between bg-[#555] py-[2px] text-white">
        <span className="h-[3px] w-3 border-y border-dotted border-[#999]" />
        <button type="button" aria-label="关闭"><svg viewBox="0 0 8 8" className="size-[7px]" stroke="currentColor" strokeWidth="2" aria-hidden="true"><path d="M1 1l6 6M7 1L1 7" /></svg></button>
        <Tool name="wrench" className="h-3 w-4" size="size-[11px]" />
      </div>
      <div className="flex min-w-0 flex-1 flex-col font-['Liberation_Mono','Noto_Sans_CJK_SC',monospace] text-[10px] text-[#333]">
        <p className="flex h-[21px] items-center border-b border-[#999] bg-[#c8c8c8] pt-1 pl-[2px]">命令: _.erase 找到 1 个</p>
        <div className="flex flex-1 items-center bg-white pl-1">
          <Icon name="prompt" className="size-[11px]" /><Caret className="mx-1 text-[#999]" />
          <input aria-label="命令" placeholder="键入命令" className="min-w-0 flex-1 bg-transparent text-[9px] italic outline-none placeholder:text-[#999]" />
        </div>
      </div>
    </div>
  );
}

const modes = ["infer", "snap", "grid", "ortho", "polar", "osnap", "osnap3", "otrack", "ducs", "dyn", "lwt", "trans", "qp", "cycle", "plus"];
const active = new Set(["otrack", "ducs", "dyn", "trans"]);

function StatusBar() {
  return (
    <footer className="flex h-[20px] shrink-0 items-stretch border-t-2 border-b-[3px] border-[#4c4c4c] bg-linear-to-b from-[#8b8b8b] to-[#707070] pl-[3px] text-[9px] text-[#1c1c1c]">
      <button type="button" className="flex w-[62px] shrink-0 items-center justify-between bg-[#a5a5a5] px-1 font-medium">比例 1:100<Caret className="text-black" /></button>
      <div className="flex w-[108px] shrink-0 items-center bg-[#9a9a9a] pl-[5px] font-['Liberation_Mono',monospace] text-[8px]"><span className="w-[35px]">2818,</span><span>29951, 0</span></div>
      {modes.map((n) => (
        <Tool key={n} name={n} size="size-[13px]" className={`w-4 border-r border-[#888] ${active.has(n) ? "bg-[#b5dbe9]" : "bg-[#b0b0b0]"} text-[#444]`} />
      ))}
      <span className="flex-1" />
      <div className="flex shrink-0 items-stretch bg-[#a8a8a8]">
        <button type="button" className="w-[22px] font-bold">模型</button>
        <Tool name="layout" className="w-4" size="size-3" /><Tool name="quick" className="w-4" size="size-[13px]" />
        <span className="w-[13px] bg-[#777]" />
        <button type="button" className="flex w-[40px] items-center justify-between px-[2px]"><Icon name="scaleMan" className="size-[11px]" />1:1<Caret /></button>
        <Tool name="annot" className="w-4" size="size-3" /><Tool name="scaleMan" className="w-4 opacity-60" size="size-3" />
        <span className="w-[4px] bg-[#777]" />
        <Tool name="gear" className="w-4" size="size-[13px]" /><Tool name="lock" className="w-4" size="size-3" /><Tool name="moon" className="w-4" size="size-3" />
        {["编组", "基线", "填充", "加粗"].map((t, i) => <button type="button" key={t} className={`w-[22px] border-r border-[#888] font-medium ${i ? "" : "bg-[#b5dbe9]"}`}>{t}</button>)}
        <button type="button" className="w-[38px] border-r border-[#888] font-medium">动态标注</button>
        <span className="w-[7px] bg-[#777]" />
        <Tool name="bulb" className="w-4 border border-[#777]" size="size-3" />
        <span className="flex w-[14px] items-center justify-center bg-[#999]"><Caret className="text-black" /></span>
        <Tool name="screen" className="w-4" size="size-[11px]" />
        <span className="flex w-[15px] items-end justify-end bg-[#777] p-px">
          <svg viewBox="0 0 9 9" className="size-[9px]" fill="#ddd" aria-hidden="true"><path d="M6 0h2v2H6zM3 3h2v2H3zM6 3h2v2H6zM0 6h2v2H0zM3 6h2v2H3zM6 6h2v2H6z" /></svg>
        </span>
      </div>
    </footer>
  );
}

function Watermark() {
  return (
    <div className="absolute right-[55px] bottom-[14px] z-20">
      <div className="absolute -top-2 left-[77px] flex gap-[4px]">
        <span className="h-[10px] w-[12px] rounded-t-full bg-[#b5b5b5]" /><span className="mt-[2px] h-[8px] w-[13px] rounded-t-full bg-[#b5b5b5]" />
      </div>
      <div className="relative flex h-[85px] w-[180px] items-center gap-3 bg-[#223058] pl-[14px] text-[#c9cddd]">
        <svg viewBox="0 0 36 36" className="size-9 shrink-0" fill="none" stroke="currentColor" strokeLinecap="round" strokeLinejoin="round" aria-hidden="true">
          <path strokeWidth="2.500" d="M9 27V5c0-3 2-4 5-2.500l16 10c4 3 4 7 0 10L14 33c-6 4-12 1-12-5V8" />
          <path strokeWidth="2" d="M9 27c0 2 2 2 4 1" />
          <path fill="currentColor" stroke="none" d="M15 13l8 5-8 5z" /><path strokeWidth="1.800" d="M25 15v6" />
        </svg>
        <div className="flex flex-col">
          <span className="w-[104px] text-[25px] leading-[26px] font-bold [text-align-last:justify]">溜溜自学</span>
          <span className="font-[Inter,sans-serif] text-[13px] leading-4">zixue.3D66.COM</span>
        </div>
      </div>
    </div>
  );
}

export default function App() {
  return (
    <div className="relative flex h-screen min-h-[520px] w-full flex-col overflow-hidden bg-[#606060] font-['Liberation_Sans','Noto_Sans_CJK_SC',sans-serif]">
      <Header />
      <FileTabs />
      <Toolbars />
      <main className="flex min-h-0 flex-1">
        <Palette />
        <div className="flex min-w-0 flex-1 flex-col">
          <Workspace />
          <CommandLine />
        </div>
      </main>
      <StatusBar />
      <Watermark />
      <button type="button" className="absolute top-[430px] -right-5 z-20 flex size-8 items-center rounded-full border border-[#f6d2b8] bg-[#ee8431] pl-[2px] text-[9px] font-bold text-white">75</button>
    </div>
  );
}
